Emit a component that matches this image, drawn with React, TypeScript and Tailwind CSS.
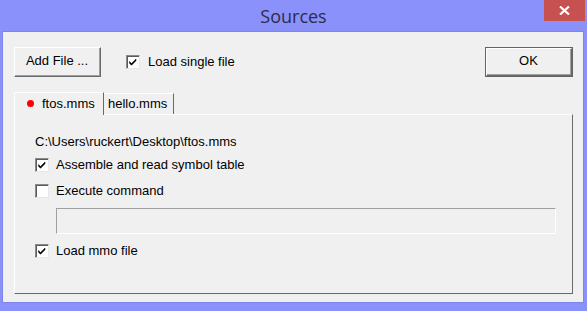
import React from "react";

function Check({ checked }: { checked: boolean }) {
  return (
    <span className="relative inline-block w-[14px] h-[14px] bg-white border-t border-l border-t-[#8a8a8a] border-l-[#8a8a8a] border-b border-r border-b-[#e8e8e8] border-r-[#e8e8e8] shadow-[inset_1px_1px_0_#5a5a5a] shrink-0">
      {checked && (
        <svg width="12" height="12" viewBox="0 0 12 12" className="absolute left-0 top-0">
          <path d="M2.5 5.5 L4.5 7.5 L9 3 L9 4.8 L4.5 9.3 L2.5 7.3 Z" fill="#000" stroke="#000" strokeWidth="0.5" />
        </svg>
      )}
    </span>
  );
}

function CheckRow({ checked, label }: { checked: boolean; label: string }) {
  return (
    <div className="flex items-center h-[14px] gap-[7px]">
      <Check checked={checked} />
      <span className="leading-[14px]">{label}</span>
    </div>
  );
}

function Btn({ label, width, isDefault }: { label: string; width: string; isDefault?: boolean }) {
  return (
    <div
      className={`${width} h-[30px] flex items-center justify-center ${
        isDefault ? "border border-[#646464]" : ""
      }`}
    >
      <div className="w-full h-full flex items-center justify-center border-t border-l border-t-[#ffffff] border-l-[#ffffff] border-b border-r border-b-[#696969] border-r-[#696969] bg-[#e1e1e1]">
        <div className="w-full h-full flex items-center justify-center border-b border-r border-b-[#a0a0a0] border-r-[#a0a0a0] bg-[#f0f0f0]">
          {label}
        </div>
      </div>
    </div>
  );
}

export default function App() {
  return (
    <div
      className="w-[587px] h-[311px] bg-[#8a91fb] flex flex-col text-[13px] text-black"
      style={{ fontFamily: '"Liberation Sans", Arial, sans-serif' }}
    >
      <div className="relative h-[31px] shrink-0 flex items-center justify-center">
        <span
          className="text-[18px] text-[#2c2d44] leading-none"
          style={{ fontFamily: '"Open Sans", "Noto Sans", sans-serif' }}
        >
          Sources
        </span>
        <div className="absolute left-[544px] top-0 w-[41px] h-[21px] bg-[#c75050] flex items-center justify-center">
          <svg width="11" height="9" viewBox="0 0 11 9">
            <path d="M1 0.5 L10 8.5 M10 0.5 L1 8.5" stroke="#fff" strokeWidth="2.2" />
          </svg>
        </div>
      </div>
      <div className="ml-[2px] mr-[3px] mb-[8px] flex-1 border border-[#7d84ea] bg-[#f0f0f0] pt-[14px] pl-[11px] pr-[10px] flex flex-col">
        <div className="flex items-center h-[31px]">
          <Btn label="Add File ..." width="w-[87px]" />
          <div className="ml-[25px] flex items-center gap-[8px]">
            <Check checked={true} />
            <span>Load single file</span>
          </div>
          <div className="ml-auto">
            <Btn label="OK" width="w-[88px]" isDefault />
          </div>
        </div>
        <div className="mt-[14px] flex items-end h-[23px] relative z-10">
          <div className="w-[90px] h-[23px] bg-[#f0f0f0] border-t border-l border-t-white border-l-white border-r border-r-[#696969] flex items-center pl-[12px] gap-[8px] mb-[-1px] pb-[1px]">
            <span className="w-[7px] h-[7px] rounded-full bg-[#ff0000]" />
            <span>ftos.mms</span>
          </div>
          <div className="w-[70px] h-[21px] bg-[#f0f0f0] border-t border-t-white border-r border-r-[#696969] flex items-center pl-[4px]">
            <span>hello.mms</span>
          </div>
        </div>
        <div className="h-[180px] border-t border-l border-t-white border-l-white border-b border-r border-b-[#696969] border-r-[#696969] pl-[20px] pr-[16px] pt-[20px] flex flex-col">
          <div className="h-[14px] leading-[14px]">C:\Users\ruckert\Desktop\ftos.mms</div>
          <div className="mt-[9px]">
            <CheckRow checked={true} label="Assemble and read symbol table" />
          </div>
          <div className="mt-[12px]">
            <CheckRow checked={false} label="Execute command" />
          </div>
          <div className="mt-[10px] ml-[21px] h-[26px] border-t border-l border-t-[#a0a0a0] border-l-[#a0a0a0] border-b border-r border-b-white border-r-white bg-[#f0f0f0]" />
          <div className="mt-[10px]">
            <CheckRow checked={true} label="Load mmo file" />
          </div>
        </div>
      </div>
    </div>
  );
}
